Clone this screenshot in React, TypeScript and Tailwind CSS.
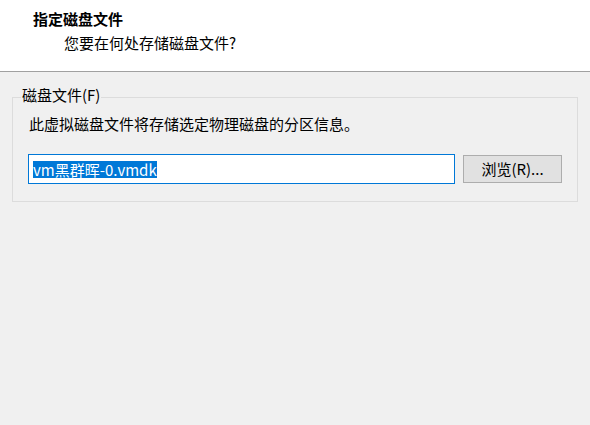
import React from "react";

export default function App() {
  return (
    <div
      className="w-[590px] h-[425px] bg-[#f0f0f0] text-black overflow-hidden"
      style={{ fontFamily: '"Noto Sans CJK SC", "Noto Sans", sans-serif' }}
    >
      <div className="h-[72px] bg-white border-b border-[#a0a0a0] pt-[9px]">
        <div className="pl-[33px] text-[15px] leading-[20px] font-bold">指定磁盘文件</div>
        <div className="pl-[64px] mt-[4px] text-[15px] leading-[20px]">您要在何处存储磁盘文件?</div>
      </div>

      <div className="mt-[25px] ml-[12px] w-[566px] h-[105px] border border-[#dcdcdc] relative pt-[16px] pl-[16px]">
        <span className="absolute top-[-13px] left-[8px] px-[1px] bg-[#f0f0f0] text-[15px] leading-[20px]">
          磁盘文件(F)
        </span>
        <div className="text-[15px] leading-[20px]">此虚拟磁盘文件将存储选定物理磁盘的分区信息。</div>
        <div className="flex items-center mt-[20px] -ml-[1px]">
          <div className="w-[427px] h-[30px] bg-white border border-[#0078d7] flex items-center pl-[4px]">
            <span className="bg-[#0078d7] text-white text-[15px] leading-[17px]">vm黑群晖-0.vmdk</span>
          </div>
          <div className="ml-[8px] w-[99px] h-[28px] bg-[#e1e1e1] border border-[#adadad] flex items-center justify-center text-[15px] leading-[20px]">
            浏览(R)...
          </div>
        </div>
      </div>
    </div>
  );
}
